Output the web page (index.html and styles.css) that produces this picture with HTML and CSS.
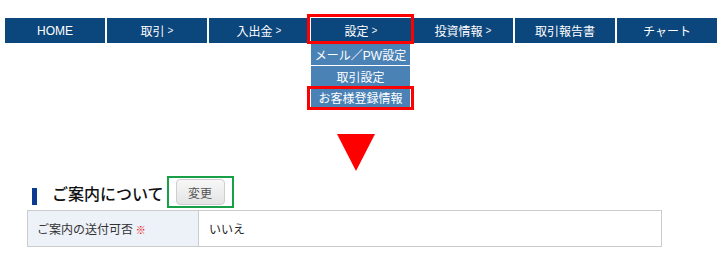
FILE: index.html
```html
<!DOCTYPE html>
<html lang="ja">
<head>
<meta charset="utf-8">
<link rel="stylesheet" href="styles.css">
</head>
<body>
<nav class="gnav">
  <div class="gnav-item">HOME</div>
  <div class="gnav-item">取引 <span class="arw">&gt;</span></div>
  <div class="gnav-item">入出金 <span class="arw">&gt;</span></div>
  <div class="gnav-item gnav-open">設定 <span class="arw">&gt;</span>
    <span class="mark mark-top"></span>
    <ul class="dropdown">
      <li>メール／PW設定</li>
      <li>取引設定</li>
      <li>お客様登録情報</li>
    </ul>
    <span class="mark mark-sub"></span>
  </div>
  <div class="gnav-item">投資情報 <span class="arw">&gt;</span></div>
  <div class="gnav-item">取引報告書</div>
  <div class="gnav-item">チャート</div>
</nav>

<main class="content">
  <div class="arrow-down"></div>
  <div class="sec-head">
    <span class="sec-bar"></span>
    <h2 class="sec-title">ご案内について</h2>
    <div class="btn-frame"><button class="btn">変更</button></div>
  </div>
  <table class="info">
    <tr>
      <th>ご案内の送付可否 <span class="req">※</span></th>
      <td>いいえ</td>
    </tr>
  </table>
</main>
</body>
</html>
```

FILE: styles.css
```css
* { box-sizing: border-box; }
body {
  margin: 0;
  background: #fff;
  font-family: "Liberation Sans", "Noto Sans CJK JP", sans-serif;
  color: #222;
}
.gnav {
  display: flex;
  gap: 2px;
  margin: 18px 0 0 5px;
}
.gnav-item {
  position: relative;
  flex: 0 0 100px;
  height: 25px;
  background: #0b467d;
  color: #fff;
  font-size: 12px;
  display: flex;
  align-items: center;
  justify-content: center;
}
.arw { font-size: 10px; margin-left: 3px; color: #f0f0f0; }
.mark {
  position: absolute;
  border: 3px solid #ff0000;
  z-index: 3;
}
.mark-top { left: -4px; top: -4px; width: 107px; height: 30px; }
.mark-sub { left: -4px; top: 68px; width: 107px; height: 24px; }
.dropdown {
  position: absolute;
  left: 0;
  top: 25px;
  width: 99px;
  margin: 0;
  padding: 0;
  list-style: none;
  z-index: 2;
}
.dropdown li {
  height: 21px;
  background: #4a82b6;
  color: #fff;
  font-size: 12px;
  display: flex;
  align-items: center;
  justify-content: center;
  border-top: 1px solid #fff;
}
.dropdown li:first-child { height: 22px; border-top: 0; }
.content { padding-left: 27px; }
.arrow-down {
  width: 0;
  height: 0;
  margin: 91px 0 0 310px;
  border-left: 19px solid transparent;
  border-right: 19px solid transparent;
  border-top: 37px solid #ff0000;
}
.sec-head {
  display: flex;
  align-items: flex-end;
  margin: 5px 0 0 5px;
}
.sec-bar {
  width: 5px;
  height: 17px;
  background: #0b3a95;
  margin-bottom: 3px;
}
.sec-title {
  margin: 0 3px 5px 15px;
  font-size: 16px;
  font-weight: 500;
  line-height: 20px;
  color: #111;
  font-family: "Noto Sans CJK JP", sans-serif;
}
.btn-frame {
  border: 2px solid #17a046;
  padding: 1px 7px;
  display: flex;
}
.btn {
  width: 49px;
  height: 26px;
  border: 1px solid #cfcfcf;
  border-radius: 4px;
  background: linear-gradient(#f7f7f7, #e4e4e4);
  color: #555;
  font-size: 12px;
  font-family: "Noto Sans CJK JP", sans-serif;
  padding: 0;
}
.info {
  margin-top: 2px;
  width: 635px;
  border-collapse: collapse;
  font-size: 12px;
  font-family: "Noto Sans CJK JP", sans-serif;
}
.info th, .info td {
  border: 1px solid #cccccc;
  height: 36px;
  text-align: left;
  font-weight: normal;
  color: #333;
}
.info th {
  width: 171px;
  background: #edf1f8;
  padding-left: 9px;
}
.info td { padding-left: 10px; color: #222; }
.req { color: #e00; font-size: 10px; }
```
